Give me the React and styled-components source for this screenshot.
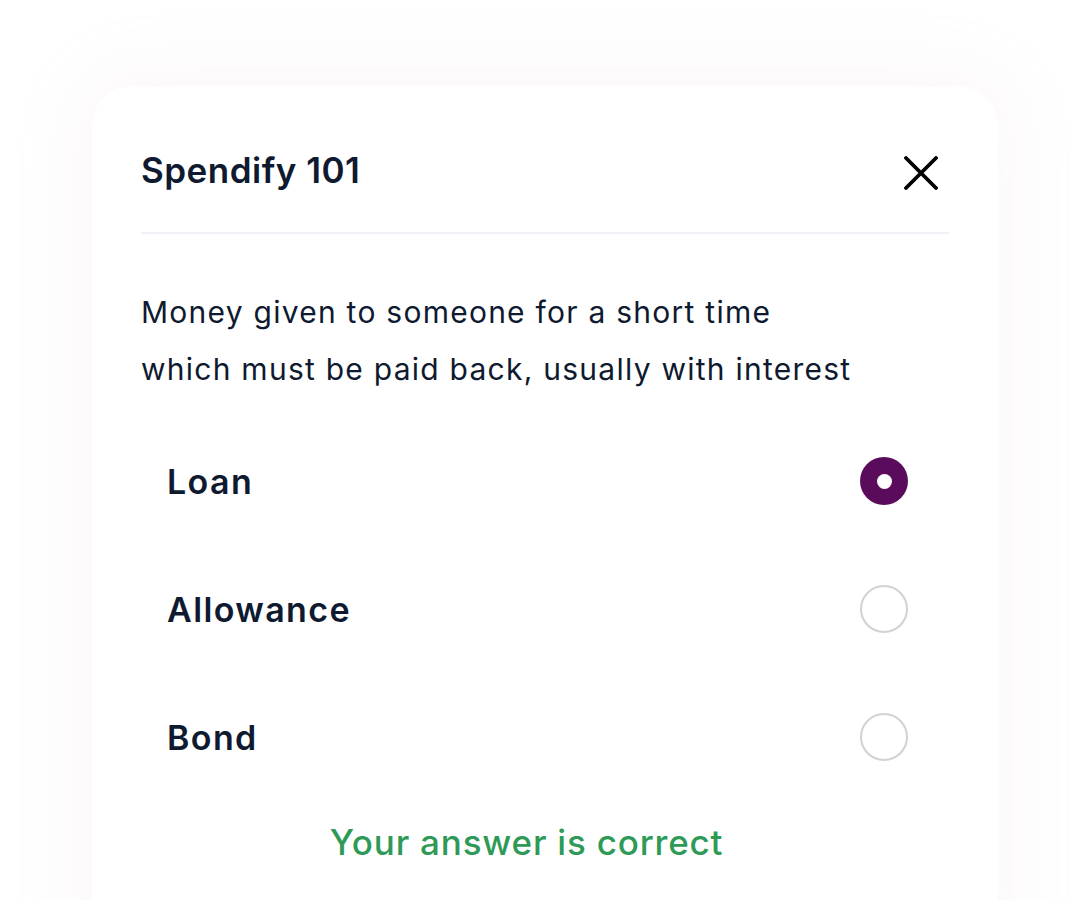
import React, { useState } from 'react';
import styled, { createGlobalStyle } from 'styled-components';

const GlobalStyle = createGlobalStyle`
  html, body {
    margin: 0;
    padding: 0;
    background: #ffffff;
    overflow: hidden;
  }
  body {
    font-family: 'Inter', 'Open Sans', sans-serif;
    color: #0f1a30;
  }
`;

const Page = styled.div`
  height: 900px;
  padding-top: 86px;
  box-sizing: border-box;
  overflow: hidden;
`;

const Card = styled.div`
  width: 906px;
  min-height: 900px;
  margin: 0 auto;
  box-sizing: border-box;
  padding: 0 49px;
  background: #ffffff;
  border-radius: 40px;
  box-shadow: 0 0 70px 10px rgba(226, 180, 206, 0.12);
`;

const Header = styled.div`
  display: flex;
  align-items: center;
  justify-content: space-between;
  height: 40px;
  padding: 64px 0 42px;
  border-bottom: 2px solid #eef1f6;
`;

const Title = styled.h1`
  margin: 0;
  font-size: 35px;
  font-weight: 600;
  letter-spacing: 0.5px;
  color: #0f1a30;
`;

const CloseButton = styled.button`
  display: flex;
  align-items: center;
  justify-content: center;
  width: 56px;
  height: 40px;
  padding: 6px 0 0;
  border: none;
  background: none;
  cursor: pointer;
`;

const Question = styled.p`
  margin: 50px 0 0;
  font-size: 30px;
  line-height: 57px;
  font-weight: 400;
  letter-spacing: 1.25px;
  color: #0f1a30;
`;

const Options = styled.div`
  display: flex;
  flex-direction: column;
  gap: 64px;
  margin-top: 51px;
  padding: 0 41px 0 26px;
`;

const Option = styled.label`
  display: flex;
  align-items: center;
  justify-content: space-between;
  height: 64px;
  cursor: pointer;
`;

const OptionLabel = styled.span`
  font-size: 34px;
  font-weight: 600;
  letter-spacing: 1.4px;
  color: #0f1a30;
`;

const Radio = styled.span`
  width: 48px;
  height: 48px;
  box-sizing: border-box;
  border-radius: 50%;
  display: flex;
  align-items: center;
  justify-content: center;
  background: ${({ checked }) => (checked ? '#5a0b5b' : '#ffffff')};
  border: ${({ checked }) => (checked ? 'none' : '2.5px solid #d2d2d2')};

  &::after {
    content: '';
    display: ${({ checked }) => (checked ? 'block' : 'none')};
    width: 15px;
    height: 15px;
    border-radius: 50%;
    background: #ffffff;
  }
`;

const Feedback = styled.p`
  margin: 52px 0 0;
  padding-right: 37px;
  text-align: center;
  font-size: 35px;
  font-weight: 500;
  letter-spacing: 0.8px;
  color: #2f9a57;
`;

const options = ['Loan', 'Allowance', 'Bond'];

function CloseIcon() {
  return (
    <svg width="34" height="34" viewBox="0 0 34 34" fill="none">
      <path d="M2 2L32 32M32 2L2 32" stroke="#000000" strokeWidth="3.8" strokeLinecap="round" />
    </svg>
  );
}

export default function App() {
  const [selected, setSelected] = useState('Loan');

  return (
    <Page>
      <GlobalStyle />
      <Card>
        <Header>
          <Title>Spendify 101</Title>
          <CloseButton aria-label="Close">
            <CloseIcon />
          </CloseButton>
        </Header>
        <Question>
          Money given to someone for a short time
          <br />
          which must be paid back, usually with interest
        </Question>
        <Options>
          {options.map((opt) => (
            <Option key={opt} onClick={() => setSelected(opt)}>
              <OptionLabel>{opt}</OptionLabel>
              <Radio checked={selected === opt} />
            </Option>
          ))}
        </Options>
        <Feedback>Your answer is correct</Feedback>
      </Card>
    </Page>
  );
}
